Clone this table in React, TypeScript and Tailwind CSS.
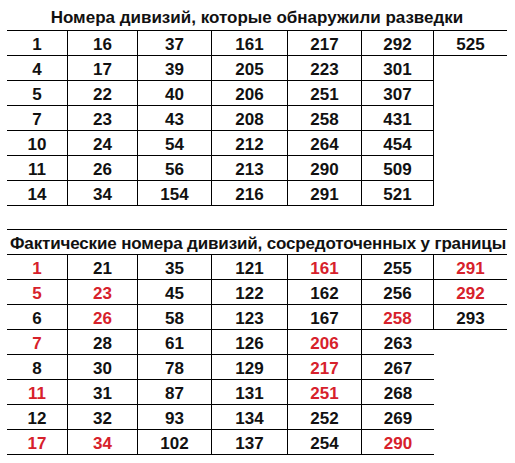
import React from "react";

const colW = ["w-[61px]", "w-[70px]", "w-[74px]", "w-[76px]", "w-[74px]", "w-[72px]", "w-[73px]"];

const found = [
  ["1", "16", "37", "161", "217", "292", "525"],
  ["4", "17", "39", "205", "223", "301"],
  ["5", "22", "40", "206", "251", "307"],
  ["7", "23", "43", "208", "258", "431"],
  ["10", "24", "54", "212", "264", "454"],
  ["11", "26", "56", "213", "290", "509"],
  ["14", "34", "154", "216", "291", "521"],
];

// "*" marks a number shown in red
const actual = [
  ["1*", "21", "35", "121", "161*", "255", "291*"],
  ["5*", "23*", "45", "122", "162", "256", "292*"],
  ["6", "26*", "58", "123", "167", "258*", "293"],
  ["7*", "28", "61", "126", "206*", "263"],
  ["8", "30", "78", "129", "217*", "267"],
  ["11*", "31", "87", "131", "251*", "268"],
  ["12", "32", "93", "134", "252", "269"],
  ["17*", "34*", "102", "137", "254", "290*"],
];

function Row({ cells, lastBorder }: { cells: string[]; lastBorder: boolean }) {
  return (
    <div className="flex h-[25px]">
      {cells.map((c, i) => {
        const red = c.endsWith("*");
        const hasRight = i < 5 || (i === 5 && lastBorder);
        return (
          <div
            key={i}
            className={`${colW[i]} flex items-center justify-center pt-[2px] border-b border-black ${
              hasRight ? "border-r" : ""
            } ${red ? "text-[#d7212b]" : "text-[#111]"}`}
          >
            {red ? c.slice(0, -1) : c}
          </div>
        );
      })}
    </div>
  );
}

export default function App() {
  return (
    <div className="w-[515px] h-[463px] bg-white pl-[7px] font-['Liberation_Sans',Arial,sans-serif] font-bold text-[17px] leading-none">
      <div className="w-[500px] h-[30px] flex items-center justify-center pt-[4px] text-[17px] text-[#111]">
        Номера дивизий, которые обнаружили разведки
      </div>
      <div className="w-[500px] border-t border-black">
        {found.map((r, i) => (
          <Row key={i} cells={r} lastBorder={true} />
        ))}
      </div>

      <div className="mt-[23px] w-[500px] h-[26px] border-t border-b border-black flex items-center pl-[3px] pt-[2px] text-[17px] text-[#111] tracking-[-0.15px] whitespace-nowrap">
        Фактические номера дивизий, сосредоточенных у границы
      </div>
      <div className="w-[500px]">
        {actual.map((r, i) => (
          <Row key={i} cells={r} lastBorder={r.length === 7} />
        ))}
      </div>
    </div>
  );
}
